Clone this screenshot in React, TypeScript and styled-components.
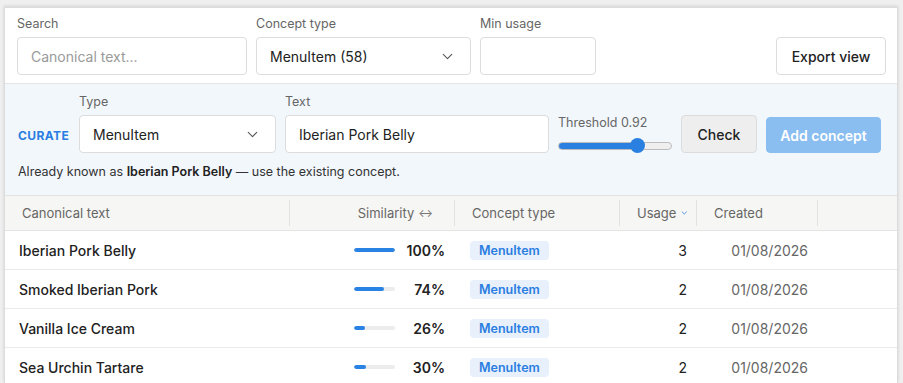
import React from "react"
import styled, { createGlobalStyle } from "styled-components"
import { ChevronDown } from "lucide-react"

const GlobalStyle = createGlobalStyle`
  html, body { margin: 0; padding: 0; }
  body {
    background: #efefef;
    font-family: Inter, "Noto Sans", "Liberation Sans", sans-serif;
    color: #222;
    overflow: hidden;
  }
  * { box-sizing: border-box; }
`

type Row = { text: string; sim: number; type: string; usage: number; created: string }

const rows: Row[] = [
  { text: "Iberian Pork Belly", sim: 100, type: "MenuItem", usage: 3, created: "01/08/2026" },
  { text: "Smoked Iberian Pork", sim: 74, type: "MenuItem", usage: 2, created: "01/08/2026" },
  { text: "Vanilla Ice Cream", sim: 26, type: "MenuItem", usage: 2, created: "01/08/2026" },
  { text: "Sea Urchin Tartare", sim: 30, type: "MenuItem", usage: 2, created: "01/08/2026" },
]

const App = () => {
  return (
    <>
      <GlobalStyle />
      <Page>
        <Panel>
          <FilterBar>
            <Field>
              <Label>Search</Label>
              <TextInput $w={230} placeholder="Canonical text..." />
            </Field>
            <Field>
              <Label>Concept type</Label>
              <Select $w={215}>
                <span>MenuItem (58)</span>
                <ChevronDown size={17} strokeWidth={1.5} color="#555" />
              </Select>
            </Field>
            <Field>
              <Label>Min usage</Label>
              <TextInput $w={116} />
            </Field>
            <Button $variant="white" $w={110}>Export view</Button>
          </FilterBar>

          <CurateBar>
            <CurateRow>
              <CurateTag>CURATE</CurateTag>
              <Field>
                <Label>Type</Label>
                <Select $w={197}>
                  <span>MenuItem</span>
                  <ChevronDown size={17} strokeWidth={1.5} color="#555" />
                </Select>
              </Field>
              <Field>
                <Label>Text</Label>
                <TextInput $w={264} defaultValue="Iberian Pork Belly" />
              </Field>
              <Threshold>
                <Label>Threshold 0.92</Label>
                <Range type="range" min={0} max={100} defaultValue={73} $pct={70} />
              </Threshold>
              <Button $variant="gray" $w={76}>Check</Button>
              <Button $variant="blue" $w={115}>Add concept</Button>
            </CurateRow>
            <Message>
              Already known as <b>Iberian Pork Belly</b> — use the existing concept.
            </Message>
          </CurateBar>

          <Table>
            <HeadCell>Canonical text</HeadCell>
            <HeadCell $align="right" $pr={22}>Similarity <Arrow>↔</Arrow></HeadCell>
            <HeadCell>Concept type</HeadCell>
            <HeadCell $align="right" $pr={8}>
              Usage <SortIcon size={14} strokeWidth={2.2} />
            </HeadCell>
            <HeadCell>Created</HeadCell>
            <HeadCell $last />
            {rows.map((r) => (
              <React.Fragment key={r.text}>
                <Cell $pl={14}><Strong>{r.text}</Strong></Cell>
                <Cell $align="right">
                  <Bar><BarFill style={{ width: `${r.sim}%` }} /></Bar>
                  <Pct>{r.sim}%</Pct>
                </Cell>
                <Cell $pl={15}><Badge>{r.type}</Badge></Cell>
                <Cell $align="right"><Usage>{r.usage}</Usage></Cell>
                <Cell $align="right"><Muted>{r.created}</Muted></Cell>
                <Cell />
              </React.Fragment>
            ))}
          </Table>
        </Panel>
      </Page>
    </>
  )
}

export default App

const Page = styled.div`
padding: 7px 5px 0 4px;
height: 383px;`

const Panel = styled.div`
background: white;
border: 1px solid #dcdcdc;
border-bottom: none;
box-shadow: 0 -1px 3px rgba(0,0,0,0.12);
height: 100%;
`
const FilterBar = styled.div`
display: flex;
align-items: flex-end;
gap: 9px;
padding: 8px 11px 8px 12px;
border-bottom: 1px solid #e4e4e4;
`
const Field = styled.div`
display: flex;
flex-direction: column;
gap: 5px;
flex-shrink: 0;
`
const Label = styled.div`
font-size: 12.5px;
line-height: 16px;
color: #666;
white-space: nowrap;
`
const TextInput = styled.input<{ $w: number }>`
width: ${(p) => p.$w}px;
height: 38px;
border: 1px solid #dcdcdc;
border-radius: 4px;
background: white;
padding: 0 13px;
font-family: inherit;
font-size: 14px;
color: #222;
outline: none;
&::placeholder { color: #9a9a9a; }
`
const Select = styled.div<{ $w: number }>`
width: ${(p) => p.$w}px;
height: 38px;
border: 1px solid #dcdcdc;
border-radius: 4px;
background: white;
padding: 0 14px 0 13px;
display: flex;
align-items: center;
justify-content: space-between;
font-size: 14px;
color: #222;
`
const Button = styled.button<{ $variant: "white" | "gray" | "blue"; $w: number }>`
flex-shrink: 0;
white-space: nowrap;
width: ${(p) => p.$w}px;
height: ${(p) => (p.$variant === "blue" ? 36 : 38)}px;
padding: 0;
border-radius: 4px;
font-family: inherit;
font-size: 14px;
font-weight: ${(p) => (p.$variant === "blue" ? 600 : 500)};
border: 1px solid ${(p) => (p.$variant === "blue" ? "#8abdf0" : "#dcdcdc")};
background: ${(p) => (p.$variant === "white" ? "white" : p.$variant === "gray" ? "#eeeeee" : "#8abdf0")};
color: ${(p) => (p.$variant === "blue" ? "white" : "#222")};
margin-left: ${(p) => (p.$variant === "white" ? "auto" : "0")};
`
const CurateBar = styled.div`
background: #f2f7fc;
padding: 10px 13px 0 13px;
height: 112px;
border-bottom: 1px solid #e2e2e2;
`
const CurateRow = styled.div`
display: flex;
align-items: flex-end;
gap: 9px;
`
const CurateTag = styled.div`
flex-shrink: 0;
width: 52px;
height: 38px;
line-height: 42px;
font-size: 12px;
font-weight: 700;
letter-spacing: 0.4px;
color: #2a7de1;
`
const Threshold = styled.div`
display: flex;
flex-direction: column;
gap: 7px;
width: 114px;
flex-shrink: 0;
`
const Range = styled.input<{ $pct: number }>`
-webkit-appearance: none;
appearance: none;
width: 114px;
height: 15px;
margin: 0;
background: transparent;
&::-webkit-slider-runnable-track {
  height: 8px;
  border-radius: 4px;
  border: 1px solid #bdbdbd;
  background: linear-gradient(to right, #2a80e0 ${(p) => p.$pct}%, #efefef ${(p) => p.$pct}%);
}
&::-webkit-slider-thumb {
  -webkit-appearance: none;
  width: 15px;
  height: 15px;
  border-radius: 50%;
  background: #2a80e0;
  margin-top: -4.5px;
  border: none;
}
`
const Message = styled.div`
margin-top: 11px;
font-size: 12.5px;
color: #333;
line-height: 16px;
b { font-weight: 600; color: #222; }
`
const Table = styled.div`
display: grid;
grid-template-columns: 285px 165px 165px 77px 121px 1fr;
grid-auto-rows: 39px;
grid-template-rows: 35px;
`
const HeadCell = styled.div<{ $align?: "right"; $pr?: number; $last?: boolean }>`
position: relative;
background: #f6f6f4;
border-bottom: 1px solid #e4e4e4;
display: flex;
align-items: center;
gap: 4px;
justify-content: ${(p) => (p.$align === "right" ? "flex-end" : "flex-start")};
padding: 0 ${(p) => p.$pr ?? 10}px 0 17px;
font-size: 13px;
color: #666;
&::after {
  content: "";
  display: ${(p) => (p.$last ? "none" : "block")};
  position: absolute;
  right: 0;
  top: 4px;
  bottom: 4px;
  width: 1px;
  background: #e2e2e2;
}
`
const SortIcon = styled(ChevronDown)`
color: #2a7de1;
stroke: #2a7de1;
`
const Arrow = styled.span`
font-size: 11px;
color: #777;
`
const Cell = styled.div<{ $align?: "right"; $pl?: number }>`
display: flex;
align-items: center;
justify-content: ${(p) => (p.$align === "right" ? "flex-end" : "flex-start")};
padding: 0 10px 0 ${(p) => p.$pl ?? 10}px;
border-bottom: 1px solid #eaeaea;
font-size: 14px;
`
const Strong = styled.span`
font-weight: 500;
color: #222;
`
const Bar = styled.div`
width: 41px;
height: 4px;
border-radius: 2px;
background: #ececec;
overflow: hidden;
margin-right: 10px;
`
const BarFill = styled.div`
height: 100%;
background: #2a82e4;
border-radius: 2px;
`
const Pct = styled.span`
font-weight: 600;
color: #222;
min-width: 40px;
text-align: right;
`
const Badge = styled.span`
display: inline-flex;
align-items: center;
height: 19px;
padding: 0 9px;
border-radius: 4px;
background: #e7f0fb;
color: #2a7de1;
font-size: 12.5px;
font-weight: 600;
`
const Usage = styled.span`
color: #222;
`
const Muted = styled.span`
color: #666;
`
